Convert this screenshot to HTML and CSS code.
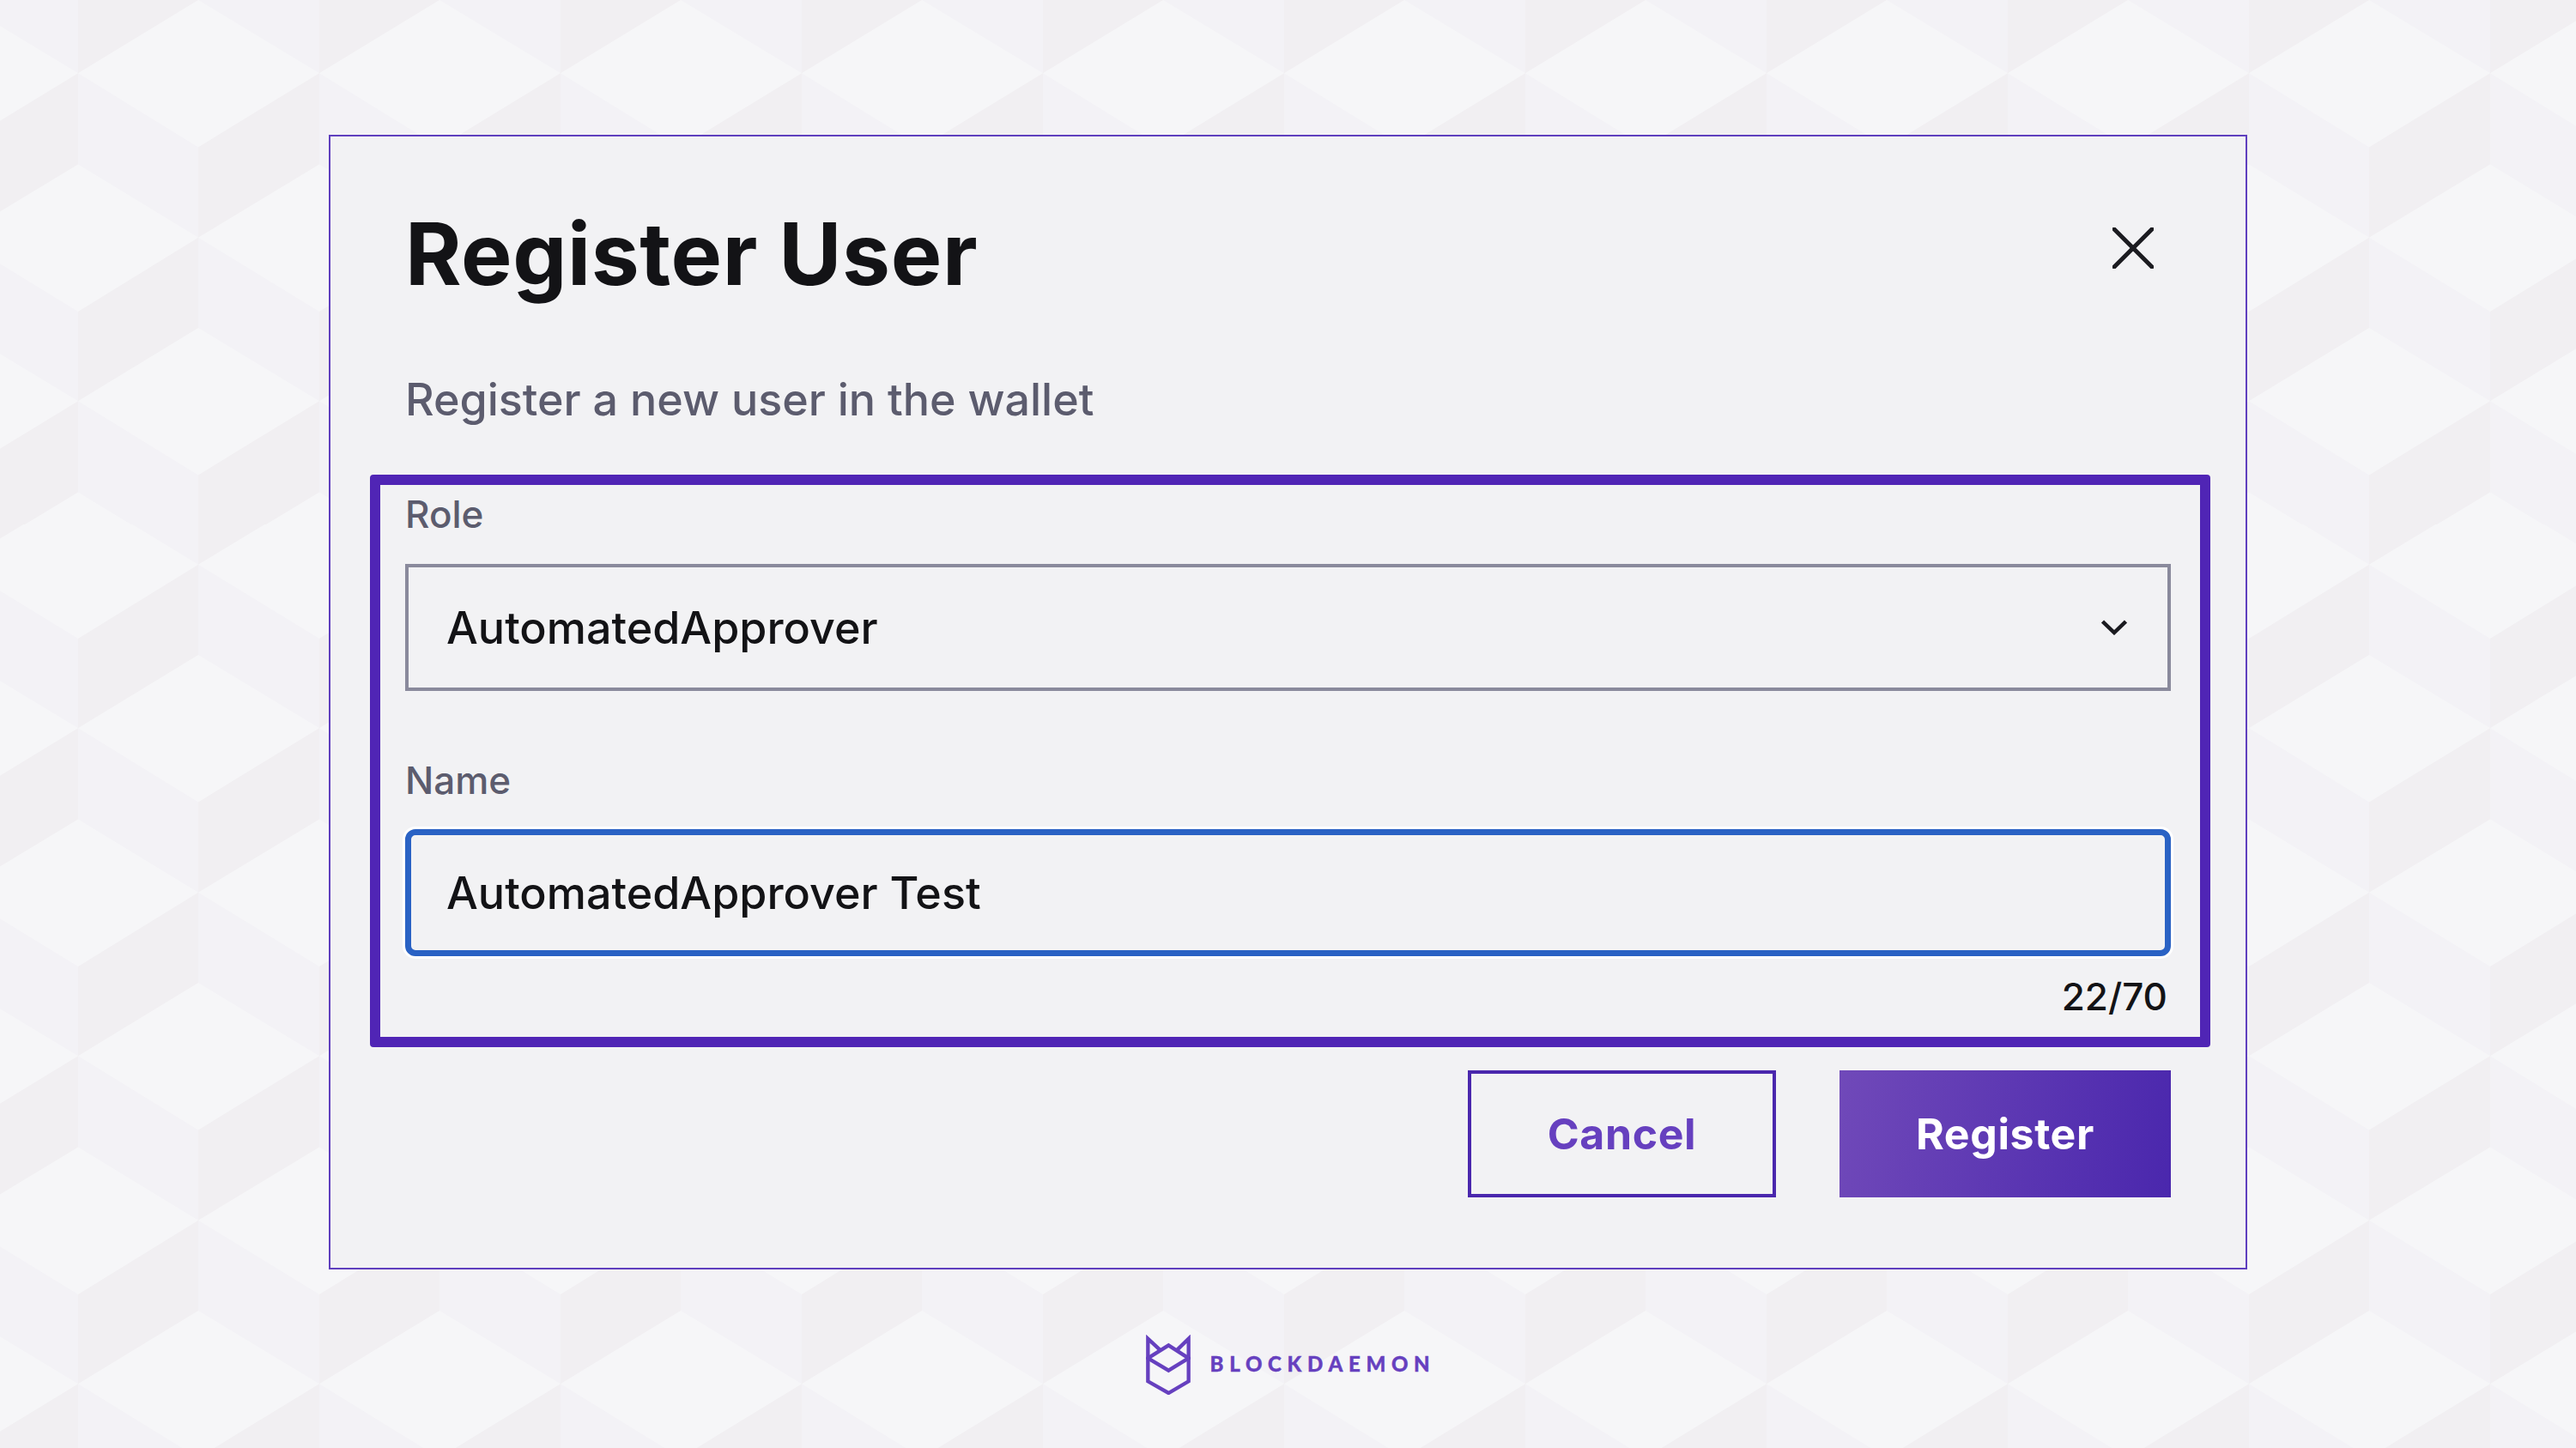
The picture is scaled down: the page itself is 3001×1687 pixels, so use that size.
FILE: index.html
```html
<!DOCTYPE html>
<html lang="en">
<head>
    <meta charset="UTF-8">
    <meta name="viewport" content="width=device-width, initial-scale=1.0">
    <title>Register User</title>
    <link rel="stylesheet" href="styles.css">
</head>
<body>
    <div class="modal">
        <div class="modal-header">
            <h1>Register User</h1>
            <svg class="close-icon" viewBox="0 0 48 48" fill="none" stroke="#1b1b20" stroke-width="5" stroke-linecap="square">
                <path d="M2 2 46 46M46 2 2 46"/>
            </svg>
        </div>
        <p class="subtitle">Register a new user in the wallet</p>

        <div class="highlight">
            <div class="field-label">Role</div>
            <div class="select-box">
                <span>AutomatedApprover</span>
                <svg class="chevron" viewBox="0 0 30 18" fill="none" stroke="#1b1b20" stroke-width="4.5">
                    <path d="M1.5 2 15 15 28.500 2"/>
                </svg>
            </div>
            <div class="field-label name-label">Name</div>
            <div class="input-box">AutomatedApprover Test</div>
            <div class="counter">22/70</div>
        </div>

        <div class="actions">
            <div class="btn btn-cancel">Cancel</div>
            <div class="btn btn-register">Register</div>
        </div>
    </div>

    <div class="logo">
        <svg class="logo-mark" viewBox="0 0 156 210" fill="none" stroke="#6640bf" stroke-width="13" stroke-linejoin="miter">
            <path d="M48 52 7 14V163L79 204 149 163V14L110 52"/>
            <path d="M7 82 79 37 149 82 79 125Z"/>
        </svg>
        <span class="logo-text">BLOCKDAEMON</span>
    </div>
</body>
</html>
```

FILE: styles.css
```css
* {
    box-sizing: border-box;
}

body {
    margin: 0;
    height: 1687px;
    padding-top: 157px;
    overflow: hidden;
    font-family: Inter, "Liberation Sans", sans-serif;
    color: #131316;
    background-color: #f6f6f8;
    background-image: url("data:image/svg+xml,%3Csvg xmlns='http://www.w3.org/2000/svg' viewBox='0 0 281 381' width='281' height='381' preserveAspectRatio='none'%3E%3Cg fill='%23f3f2f6'%3E%3Cpath d='M91 85 231 171V276L91 191Z'/%3E%3Cpath d='M231 276 372 362V466L231 381Z'/%3E%3Cpath d='M-50 276 91 362V466L-50 381Z'/%3E%3Cpath d='M231-105 372-19V85L231 0Z'/%3E%3Cpath d='M-50-105 91-19V85L-50 0Z'/%3E%3C/g%3E%3Cg fill='%23f1eff2'%3E%3Cpath d='M231 171 372 85V191L231 276Z'/%3E%3Cpath d='M-50 171 91 85V191L-50 276Z'/%3E%3Cpath d='M91 362 231 276V381L91 466Z'/%3E%3Cpath d='M91-19 231-105V0L91 85Z'/%3E%3C/g%3E%3C/svg%3E");
    background-size: 281px 381.7px;
}

.modal {
    width: 2235px;
    height: 1322px;
    margin: 0 auto;
    padding: 77px 87px 81px;
    background: #f2f2f4;
    border: 2px solid #5f3fbe;
}

.modal-header {
    display: flex;
    justify-content: space-between;
    align-items: flex-start;
}

h1 {
    margin: 0;
    font-size: 100px;
    line-height: 120px;
    font-weight: 700;
    letter-spacing: 0.6px;
}

.close-icon {
    width: 48px;
    height: 48px;
    margin-top: 29px;
    margin-right: 20px;
}

.subtitle {
    margin: 78px 0 55px;
    font-size: 52px;
    line-height: 64px;
    font-weight: 500;
    color: #5c5c6e;
}

.highlight {
    margin: 0 -46px 0 -41px;
    padding: 8px 34px 21px 29px;
    border: 12px solid #5025b5;
    border-radius: 4px;
}

.field-label {
    font-size: 44px;
    line-height: 52px;
    font-weight: 500;
    color: #5c5c6e;
    margin-bottom: 32px;
}

.name-label {
    margin-top: 78px;
    margin-bottom: 31px;
}

.select-box,
.input-box {
    display: flex;
    align-items: center;
    justify-content: space-between;
    height: 148px;
    font-size: 52px;
    font-weight: 500;
}

.select-box {
    padding: 0 47px 0 44px;
    border: 4px solid #8a8a9c;
}

.chevron {
    width: 30px;
    height: 18px;
}

.input-box {
    padding-left: 41px;
    border: 7px solid #2a62c4;
    border-radius: 12px;
    box-shadow: 0 0 0 3px #fff;
}

.counter {
    margin-top: 21px;
    padding-right: 4px;
    font-size: 44px;
    line-height: 52px;
    font-weight: 500;
    text-align: right;
}

.actions {
    display: flex;
    justify-content: flex-end;
    gap: 74px;
    margin-top: 27px;
}

.btn {
    display: flex;
    align-items: center;
    justify-content: center;
    height: 148px;
    font-size: 50px;
    font-weight: 700;
    letter-spacing: 0.6px;
}

.btn-cancel {
    width: 359px;
    border: 4px solid #4a27ad;
    color: #6640bf;
}

.btn-register {
    width: 386px;
    color: #fff;
    background: linear-gradient(100deg, #7049b9, #4a27ad);
}

.logo {
    display: flex;
    align-items: center;
    justify-content: center;
    gap: 23px;
    margin-top: 76px;
    padding-left: 6px;
}

.logo-mark {
    width: 52px;
    height: 70px;
}

.logo-text {
    padding-bottom: 3px;
    font-family: Lato, sans-serif;
    font-size: 24px;
    font-weight: 900;
    letter-spacing: 6.7px;
    color: #6640bf;
    -webkit-text-stroke: 0.4px #6640bf;
}
```
